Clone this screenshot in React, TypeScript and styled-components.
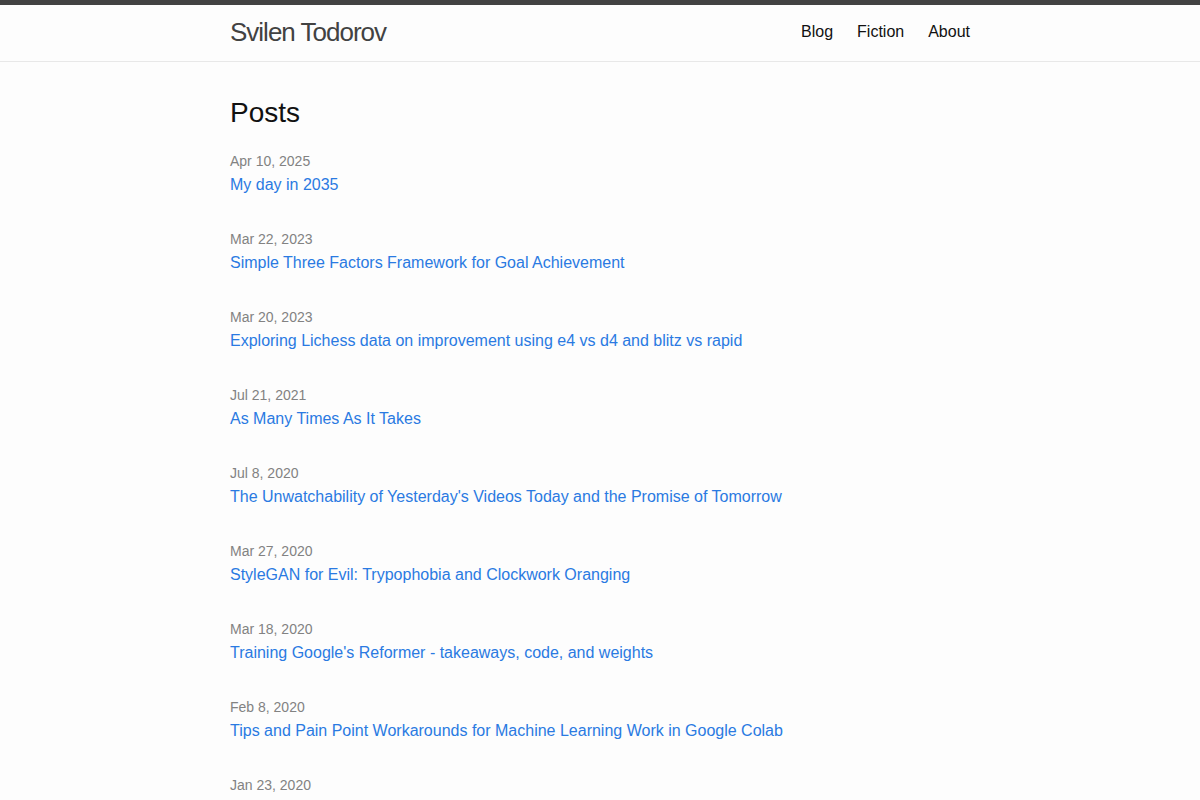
import styled, { createGlobalStyle } from 'styled-components';

const GlobalStyle = createGlobalStyle`
  html, body {
    margin: 0;
    padding: 0;
    background: #fdfdfd;
  }
  body {
    font-family: "Liberation Sans", Helvetica, Arial, sans-serif;
    font-size: 16px;
    line-height: 1.5;
    color: #111111;
  }
`;

const Header = styled.header`
  border-top: 5px solid #424242;
  border-bottom: 1px solid #e8e8e8;
  min-height: 56px;
`;

const Wrapper = styled.div`
  max-width: 740px;
  margin: 0 auto;
`;

const HeaderInner = styled(Wrapper)`
  display: flex;
  justify-content: space-between;
  align-items: center;
`;

const SiteTitle = styled.a`
  font-size: 26px;
  line-height: 54px;
  letter-spacing: -1px;
  color: #424242;
  text-decoration: none;
`;

const Nav = styled.nav`
  display: flex;
  gap: 24px;
  line-height: 54px;
`;

const NavLink = styled.a`
  color: #111111;
  text-decoration: none;
`;

const Main = styled.main`
  padding: 30px 0;
`;

const Heading = styled.h1`
  font-size: 28px;
  font-weight: 400;
  line-height: 42px;
  margin: 0 0 17px;
`;

const PostList = styled.ul`
  list-style: none;
  margin: 0;
  padding: 0;
`;

const PostItem = styled.li`
  margin-bottom: 32px;
`;

const Meta = styled.div`
  font-size: 14px;
  line-height: 21px;
  color: #828282;
`;

const PostLink = styled.a`
  display: block;
  margin-top: 1px;
  color: #2a7ae2;
  text-decoration: none;
`;

const posts = [
  { date: 'Apr 10, 2025', title: 'My day in 2035' },
  { date: 'Mar 22, 2023', title: 'Simple Three Factors Framework for Goal Achievement' },
  { date: 'Mar 20, 2023', title: 'Exploring Lichess data on improvement using e4 vs d4 and blitz vs rapid' },
  { date: 'Jul 21, 2021', title: 'As Many Times As It Takes' },
  { date: 'Jul 8, 2020', title: "The Unwatchability of Yesterday's Videos Today and the Promise of Tomorrow" },
  { date: 'Mar 27, 2020', title: 'StyleGAN for Evil: Trypophobia and Clockwork Oranging' },
  { date: 'Mar 18, 2020', title: "Training Google's Reformer - takeaways, code, and weights" },
  { date: 'Feb 8, 2020', title: 'Tips and Pain Point Workarounds for Machine Learning Work in Google Colab' },
  { date: 'Jan 23, 2020', title: 'Installing Ubuntu on a laptop for deep learning' },
];

const App = () => {
  return (
    <>
      <GlobalStyle />
      <Header>
        <HeaderInner>
          <SiteTitle href="#">Svilen Todorov</SiteTitle>
          <Nav>
            <NavLink href="#">Blog</NavLink>
            <NavLink href="#">Fiction</NavLink>
            <NavLink href="#">About</NavLink>
          </Nav>
        </HeaderInner>
      </Header>
      <Main>
        <Wrapper>
          <Heading>Posts</Heading>
          <PostList>
            {posts.map((p) => (
              <PostItem key={p.title}>
                <Meta>{p.date}</Meta>
                <PostLink href="#">{p.title}</PostLink>
              </PostItem>
            ))}
          </PostList>
        </Wrapper>
      </Main>
    </>
  );
};

export default App;
